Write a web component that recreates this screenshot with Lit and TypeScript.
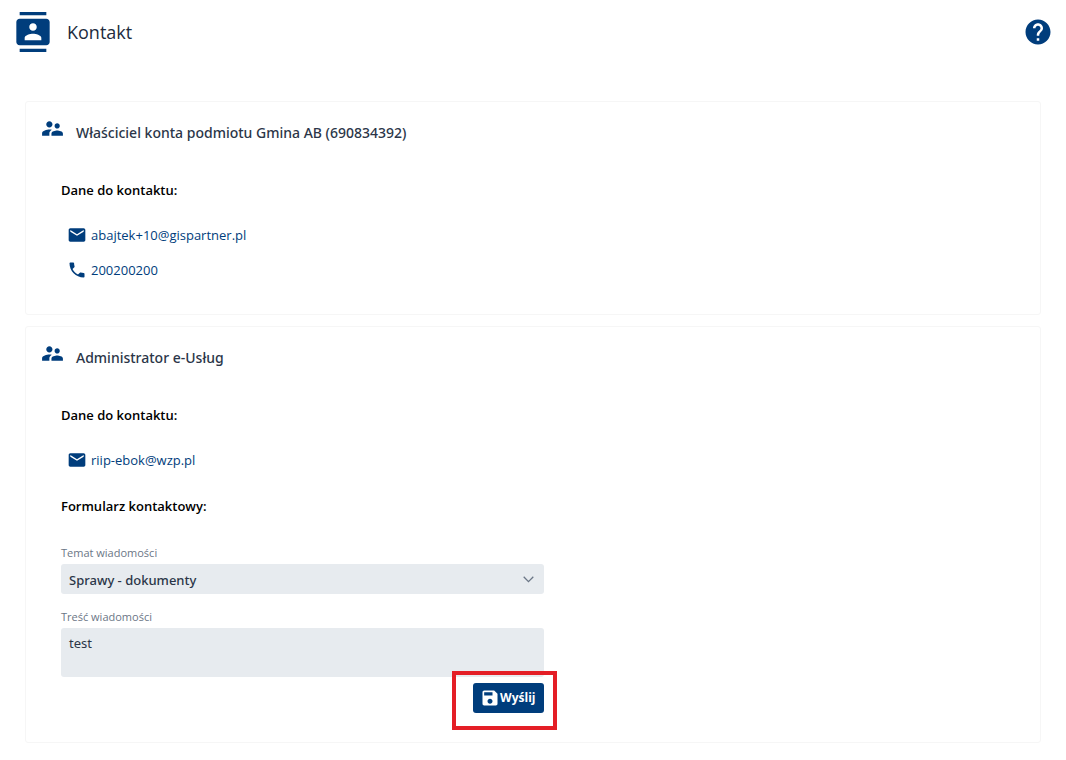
import { LitElement, html, css, svg } from "lit";
import { customElement, property } from "lit/decorators.js";

const ICONS: Record<string, string> = {
  contacts:
    "M20 0H4v2h16V0zM4 24h16v-2H4v2zM20 4H4c-1.1 0-2 .9-2 2v12c0 1.1.9 2 2 2h16c1.1 0 2-.9 2-2V6c0-1.1-.9-2-2-2zm-8 2.75c1.24 0 2.25 1.01 2.25 2.25s-1.01 2.25-2.25 2.25S9.75 10.24 9.75 9 10.76 6.75 12 6.75zM17 17H7v-1.5c0-1.67 3.33-2.5 5-2.5s5 .83 5 2.5V17z",
  help:
    "M12 2C6.48 2 2 6.48 2 12s4.48 10 10 10 10-4.48 10-10S17.52 2 12 2zm1 17h-2v-2h2v2zm2.07-7.75l-.9.92C13.45 12.9 13 13.5 13 15h-2v-.5c0-1.1.45-2.1 1.17-2.83l1.24-1.26c.37-.36.59-.86.59-1.41 0-1.1-.9-2-2-2s-2 .9-2 2H8c0-2.21 1.79-4 4-4s4 1.79 4 4c0 .88-.36 1.68-.93 2.25z",
  people:
    "M16.5 12c1.38 0 2.49-1.12 2.49-2.5S17.88 7 16.5 7 14 8.12 14 9.5s1.12 2.5 2.5 2.5zM9 11c1.66 0 2.99-1.34 2.99-3S10.66 5 9 5 6 6.34 6 8s1.34 3 3 3zm7.5 3c-1.83 0-5.5.92-5.5 2.75V19h11v-2.25c0-1.83-3.67-2.75-5.5-2.75zM9 13c-2.33 0-7 1.17-7 3.5V19h7v-2.25c0-.85.33-2.34 2.37-3.47C10.5 13.1 9.66 13 9 13z",
  mail:
    "M20 4H4c-1.1 0-1.99.9-1.99 2L2 18c0 1.1.9 2 2 2h16c1.1 0 2-.9 2-2V6c0-1.1-.9-2-2-2zm0 4l-8 5-8-5V6l8 5 8-5v2z",
  phone:
    "M6.62 10.79c1.44 2.83 3.76 5.14 6.59 6.59l2.2-2.2c.27-.27.67-.36 1.02-.24 1.12.37 2.33.57 3.57.57.55 0 1 .45 1 1V20c0 .55-.45 1-1 1-9.39 0-17-7.61-17-17 0-.55.45-1 1-1h3.5c.55 0 1 .45 1 1 0 1.25.2 2.45.57 3.57.11.35.03.74-.25 1.02l-2.2 2.2z",
  save:
    "M17 3H5c-1.11 0-2 .9-2 2v14c0 1.1.89 2 2 2h14c1.1 0 2-.9 2-2V7l-4-4zm-5 16c-1.66 0-3-1.34-3-3s1.34-3 3-3 3 1.34 3 3-1.34 3-3 3zm3-10H5V5h10v4z",
};

@customElement("app-icon")
export class AppIcon extends LitElement {
  @property() name = "";

  static styles = css`
    :host {
      display: block;
      flex: none;
      width: 20px;
      height: 20px;
    }
    .glyph {
      display: block;
      width: 100%;
      height: 100%;
      fill: currentColor;
    }
  `;

  render() {
    return html`<svg class="glyph" viewBox="0 0 24 24" aria-hidden="true">
      ${svg`<path d=${ICONS[this.name] ?? ""}></path>`}
    </svg>`;
  }
}

@customElement("contact-card")
export class ContactCard extends LitElement {
  @property() heading = "";
  @property() email = "";
  @property() phone = "";

  static styles = css`
    :host {
      display: block;
      border: 1px solid #f6f6f6;
      border-radius: 3px;
      padding: 14px 14px 29px;
    }
    .head {
      display: flex;
      align-items: flex-start;
      gap: 11px;
      color: #003d7c;
    }
    .people {
      width: 25px;
      height: 25px;
    }
    .title {
      margin: 7px 0 0;
      font-family: "Noto Sans", sans-serif;
      font-size: 14px;
      line-height: 20px;
      font-weight: 500;
      color: #2b3648;
    }
    .body {
      padding: 37px 0 0 21px;
    }
    .label {
      margin: 0;
      font-size: 13px;
      line-height: 20px;
      font-weight: 600;
      color: #000;
    }
    .list {
      list-style: none;
      margin: 25px 0 0;
      padding: 0 6px 5px;
      display: grid;
      gap: 15px;
    }
    .link {
      display: flex;
      align-items: center;
      gap: 4px;
      width: fit-content;
      font-size: 13px;
      line-height: 20px;
      font-weight: 500;
      color: #003d7c;
      text-decoration: none;
    }
  `;

  render() {
    return html`
      <div class="head">
        <app-icon class="people" name="people"></app-icon>
        <h2 class="title">${this.heading}</h2>
      </div>
      <div class="body">
        <h3 class="label">Dane do kontaktu:</h3>
        <ul class="list">
          <li>
            <a class="link" href="mailto:${this.email}"><app-icon name="mail"></app-icon>${this.email}</a>
          </li>
          ${this.phone
            ? html`<li>
                <a class="link" href="tel:${this.phone}"><app-icon name="phone"></app-icon>${this.phone}</a>
              </li>`
            : null}
        </ul>
        <slot></slot>
      </div>
    `;
  }
}

@customElement("contact-form")
export class ContactForm extends LitElement {
  static styles = css`
    :host {
      display: block;
      margin-top: 21px;
    }
    .label {
      margin: 0;
      font-size: 13px;
      line-height: 20px;
      font-weight: 600;
      color: #000;
    }
    .form {
      display: flex;
      flex-direction: column;
      width: 50%;
      min-width: 280px;
      margin-top: 29px;
    }
    .caption {
      font-size: 11px;
      line-height: 16px;
      margin-bottom: 3px;
      color: #6b7686;
    }
    .control {
      position: relative;
      margin-bottom: 15px;
    }
    .select,
    .area {
      display: block;
      box-sizing: border-box;
      width: 100%;
      margin: 0;
      border: 0;
      border-radius: 3px;
      background: #e7ebef;
      color: #2b3648;
      font: 500 13px/20px "Noto Sans", sans-serif;
    }
    .select {
      appearance: none;
      height: 30px;
      padding: 2px 32px 0 8px;
    }
    .chevron {
      position: absolute;
      right: 10px;
      top: 12px;
      width: 11px;
      height: 7px;
      fill: none;
      stroke: #6b7686;
      stroke-width: 1.3;
      pointer-events: none;
    }
    .area {
      height: 49px;
      padding: 5px 8px;
      font-weight: 400;
      resize: none;
    }
    .actions {
      display: flex;
      justify-content: flex-end;
      margin-top: 6px;
    }
    .highlight {
      position: relative;
    }
    .highlight::after {
      content: "";
      position: absolute;
      inset: -12px -13px -17px -21px;
      border: 4px solid #e41e26;
      pointer-events: none;
    }
    .send {
      display: flex;
      align-items: center;
      height: 30px;
      padding: 0 8px 0 7px;
      border: 0;
      border-radius: 3px;
      background: #003d7c;
      color: #fff;
      font: 700 12px/20px "Open Sans", sans-serif;
    }
  `;

  render() {
    return html`
      <h3 class="label">Formularz kontaktowy:</h3>
      <form class="form" @submit=${(e: Event) => e.preventDefault()}>
        <label class="caption" for="topic">Temat wiadomości</label>
        <div class="control">
          <select class="select" id="topic">
            <option selected>Sprawy - dokumenty</option>
          </select>
          <svg class="chevron" viewBox="0 0 11 7" aria-hidden="true">
            <path d="M0.7 0.8 5.5 5.6 10.3 0.8"></path>
          </svg>
        </div>
        <label class="caption" for="message">Treść wiadomości</label>
        <textarea class="area" id="message" .value=${"test"}></textarea>
        <div class="actions">
          <div class="highlight">
            <button class="send" type="submit"><app-icon name="save"></app-icon>Wyślij</button>
          </div>
        </div>
      </form>
    `;
  }
}

@customElement("app-root")
export class AppRoot extends LitElement {
  static styles = css`
    :host {
      display: block;
      min-height: 100vh;
      background: #fff;
      color: #212b3d;
      font-family: "Open Sans", "Segoe UI", sans-serif;
    }
    .top {
      display: flex;
      align-items: center;
      gap: 14px;
      padding: 12px 13px;
      color: #003d7c;
    }
    .logo {
      width: 40px;
      height: 40px;
    }
    .title {
      flex: 1;
      margin: 0;
      font-size: 18px;
      line-height: 24px;
      font-weight: 400;
      color: #212b3d;
    }
    .help {
      padding: 0;
      border: 0;
      background: none;
      color: inherit;
    }
    .help-icon {
      width: 30px;
      height: 30px;
    }
    .cards {
      display: grid;
      gap: 11px;
      padding: 37px 25px 16px;
    }
  `;

  render() {
    return html`
      <header class="top">
        <app-icon class="logo" name="contacts"></app-icon>
        <h1 class="title">Kontakt</h1>
        <button class="help" type="button" aria-label="Pomoc">
          <app-icon class="help-icon" name="help"></app-icon>
        </button>
      </header>
      <main class="cards">
        <contact-card
          heading="Właściciel konta podmiotu Gmina AB (690834392)"
          email="abajtek+10@gispartner.pl"
          phone="200200200"
        ></contact-card>
        <contact-card heading="Administrator e-Usług" email="riip-ebok@wzp.pl">
          <contact-form></contact-form>
        </contact-card>
      </main>
    `;
  }
}
